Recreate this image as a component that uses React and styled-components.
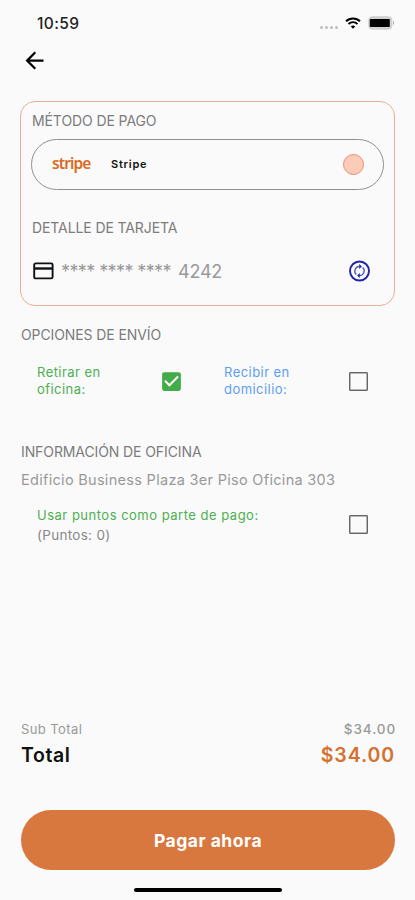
import React from "react";
import styled, { createGlobalStyle } from "styled-components";
import { MdArrowBack, MdCheckBox } from "react-icons/md";

const App = () => {
  return (
    <Screen>
      <GlobalStyle />
      <StatusBar>
        <Clock>10:59</Clock>
        <StatusIcons>
          <SignalDots>
            <i />
            <i />
            <i />
            <i />
          </SignalDots>
          <WifiIcon />
          <Battery />
        </StatusIcons>
      </StatusBar>
      <NavBar>
        <MdArrowBack size={27} />
      </NavBar>

      {/* 
      * Payment method
     */}
      <PaymentCard>
        <SectionTitle inset>MÉTODO DE PAGO</SectionTitle>
        <Method>
          <StripeLogo>stripe</StripeLogo>
          <MethodName>Stripe</MethodName>
          <Radio />
        </Method>
        <SectionTitle inset>DETALLE DE TARJETA</SectionTitle>
        <CardDetail>
          <CardIcon />
          <CardNumber>
            <Stars>**** **** ****</Stars>4242
          </CardNumber>
          <ChangeIcon />
        </CardDetail>
      </PaymentCard>

      {/* 
      * Shipping
     */}
      <Section top={19}>
        <SectionTitle>OPCIONES DE ENVÍO</SectionTitle>
        <Options>
          <Option>
            <OptionLabel color="#4caf50" width="90px">
              Retirar en oficina:
            </OptionLabel>
            <MdCheckBox size={25} color="#43ab47" />
          </Option>
          <Option>
            <OptionLabel color="#5a9ff2" width="90px">
              Recibir en domicilio:
            </OptionLabel>
            <EmptyBox />
          </Option>
        </Options>
      </Section>

      {/* 
      * Office
     */}
      <Section top={44}>
        <SectionTitle>INFORMACIÓN DE OFICINA</SectionTitle>
        <Address>Edificio Business Plaza 3er Piso Oficina 303</Address>
        <Points>
          <div>
            <OptionLabel color="#4caf50" spacing="0.5px">
              Usar puntos como parte de pago:
            </OptionLabel>
            <PointsCount>(Puntos: 0)</PointsCount>
          </div>
          <EmptyBox raised />
        </Points>
      </Section>

      <Summary>
        <SubTotal>
          <span>Sub Total</span>
          <b>$34.00</b>
        </SubTotal>
        <Total>
          <span>Total</span>
          <Price>$34.00</Price>
        </Total>
        <PayButton>Pagar ahora</PayButton>
        <HomeIndicator />
      </Summary>
    </Screen>
  );
};

const WifiIcon = () => (
  <svg width="16" height="12" viewBox="0 0 16 12" fill="none" stroke="#000">
    <path d="M1 4.3a10 10 0 0 1 14 0" strokeWidth="2" />
    <path d="M3.5 7a6.4 6.4 0 0 1 9 0" strokeWidth="1.8" />
    <path d="M8 11.8 5.8 9.5a3.2 3.2 0 0 1 4.4 0z" fill="#000" stroke="none" />
  </svg>
);

const Battery = () => (
  <svg width="27" height="14" viewBox="0 0 27 14">
    <rect x="0.8" y="0.8" width="23" height="12.4" rx="3" fill="#d0d0d0" stroke="#cfcfcf" />
    <rect x="1.8" y="2.9" width="20" height="8.2" rx="0.8" fill="#000" />
    <path d="M25 4.8c1.5.5 1.5 3.9 0 4.4z" fill="#b5b5b5" />
  </svg>
);

const CardIcon = () => (
  <svg width="21" height="18" viewBox="0 0 21 18" fill="none" stroke="#111">
    <rect x="1.2" y="1.4" width="18.4" height="15" rx="1.4" strokeWidth="1.9" />
    <path d="M1 6.500h18.500" strokeWidth="2.4" />
  </svg>
);

const ChangeIcon = () => (
  <svg width="25" height="25" viewBox="0 0 25 25" fill="none" stroke="#2222ab">
    <circle cx="12.500" cy="12" r="9.500" strokeWidth="1.9" />
    <path d="M9.300 15.500a4.700 4.700 0 0 1 3.200-8.100M15.700 8.500a4.700 4.700 0 0 1-3.200 8.100" stroke="#4a55b5" strokeWidth="1.3" />
    <path d="M12.200 5v5l2.700-2.500zM12.800 14v5l-2.700-2.500z" fill="#2222ab" stroke="none" />
  </svg>
);

const GlobalStyle = createGlobalStyle`
  body {
    margin: 0;
    background: #fafafa;
  }
  * {
    box-sizing: border-box;
  }
`;

const Screen = styled.div`
  display: flex;
  flex-direction: column;
  width: 415px;
  height: 900px;
  padding: 0 20px;
  overflow: hidden;
  background: #fafafa;
  color: #111;
  font-family: Inter, "Liberation Sans", sans-serif;
  svg {
    display: block;
    flex-shrink: 0;
  }
`;

const StatusBar = styled.div`
  display: flex;
  justify-content: space-between;
  align-items: center;
  height: 46px;
  padding-left: 17px;
`;

const Clock = styled.div`
  color: #222;
  font-size: 15.5px;
  font-weight: 500;
  letter-spacing: 0.4px;
`;

const StatusIcons = styled.div`
  display: flex;
  align-items: center;
  gap: 7px;
`;

const SignalDots = styled.div`
  display: flex;
  gap: 2px;
  padding-top: 8px;
  i {
    width: 3px;
    height: 3px;
    border-radius: 50%;
    background: #bdbdbd;
  }
`;

const NavBar = styled.div`
  display: flex;
  align-items: center;
  height: 28px;
  padding-left: 1px;
  color: #000;
`;

const PaymentCard = styled.div`
  height: 205px;
  margin-top: 27px;
  padding: 9px 10px 0;
  border: 1px solid #e8ae9b;
  border-radius: 15px;
`;

const SectionTitle = styled.div`
  padding-left: ${props => (props.inset ? "1px" : "0")};
  color: #7c7c7c;
  font-size: 14px;
  line-height: 20px;
  letter-spacing: -0.1px;
`;

const Method = styled.div`
  display: flex;
  align-items: center;
  height: 51px;
  margin: 8px 0 28px;
  padding: 0 20px;
  border: 1px solid #909090;
  border-radius: 26px;
`;

const StripeLogo = styled.div`
  width: 59px;
  margin-top: -3px;
  color: #dc6a22;
  font-family: "Noto Sans", sans-serif;
  font-size: 15.5px;
  font-weight: 600;
  letter-spacing: -0.9px;
`;

const MethodName = styled.div`
  flex: 1;
  margin-top: -1px;
  font-size: 11px;
  font-weight: 600;
  letter-spacing: 0.75px;
`;

const Radio = styled.div`
  width: 21px;
  height: 21px;
  margin-right: -1px;
  margin-top: -1px;
  border: 1px solid #e58f73;
  border-radius: 50%;
  background: #fdcbb8;
`;

const CardDetail = styled.div`
  display: flex;
  align-items: center;
  height: 26px;
  margin-top: 20px;
  padding: 0 12px 0 2px;
`;

const CardNumber = styled.div`
  flex: 1;
  display: flex;
  padding-left: 7px;
  color: #999;
  font-size: 18px;
  letter-spacing: -0.2px;
`;

const Stars = styled.span`
  width: 117px;
  white-space: nowrap;
  letter-spacing: -0.6px;
`;

const Section = styled.div`
  padding-left: 1px;
  margin-top: ${props => props.top}px;
`;

const Options = styled.div`
  display: grid;
  grid-template-columns: 187px 187px;
  margin-top: 19px;
`;

const Option = styled.div`
  display: flex;
  justify-content: space-between;
  align-items: center;
  padding: 0 24px 0 16px;
`;

const OptionLabel = styled.div`
  width: ${props => (props.width ? props.width : "auto")};
  color: ${props => props.color};
  font-size: 13px;
  line-height: 17px;
  letter-spacing: ${props => (props.spacing ? props.spacing : "0.45px")};
`;

const EmptyBox = styled.div`
  width: 19px;
  height: 19px;
  margin-right: 3px;
  margin-bottom: ${props => (props.raised ? "3px" : "0")};
  border: 1px solid #666;
  border-radius: 1px;
  box-shadow: inset 0 0 0 0.5px #777;
`;

const Address = styled.div`
  margin-top: 8px;
  color: #999;
  font-size: 14.5px;
  line-height: 20px;
  letter-spacing: 0.3px;
`;

const Points = styled.div`
  display: flex;
  justify-content: space-between;
  align-items: center;
  margin-top: 17px;
  padding: 0 24px 0 16px;
`;

const PointsCount = styled.div`
  margin-top: 3px;
  color: #888;
  font-size: 13.5px;
  line-height: 17px;
  letter-spacing: 0.3px;
`;

const Summary = styled.div`
  margin-top: auto;
  padding-left: 1px;
`;

const SubTotal = styled.div`
  display: flex;
  justify-content: space-between;
  color: #999;
  font-size: 13px;
  line-height: 18px;
  letter-spacing: 0.4px;
  b {
    margin-right: -1px;
    font-size: 13.5px;
    font-weight: 500;
    letter-spacing: 0.9px;
  }
`;

const Total = styled.div`
  display: flex;
  justify-content: space-between;
  font-size: 19.5px;
  font-weight: 600;
  line-height: 34px;
  letter-spacing: 0.6px;
`;

const Price = styled.span`
  color: #d5702f;
  letter-spacing: 0.9px;
`;

const PayButton = styled.button`
  display: block;
  width: 100%;
  height: 60px;
  margin-top: 38px;
  padding: 1px 0 0;
  border: 0;
  border-radius: 30px;
  background: #d8783e;
  color: #fff;
  font-family: inherit;
  font-size: 17.5px;
  font-weight: 700;
  letter-spacing: 0.5px;
`;

const HomeIndicator = styled.div`
  width: 148px;
  height: 4px;
  margin: 18px auto 8px;
  border-radius: 2px;
  background: #000;
`;

export default App;
